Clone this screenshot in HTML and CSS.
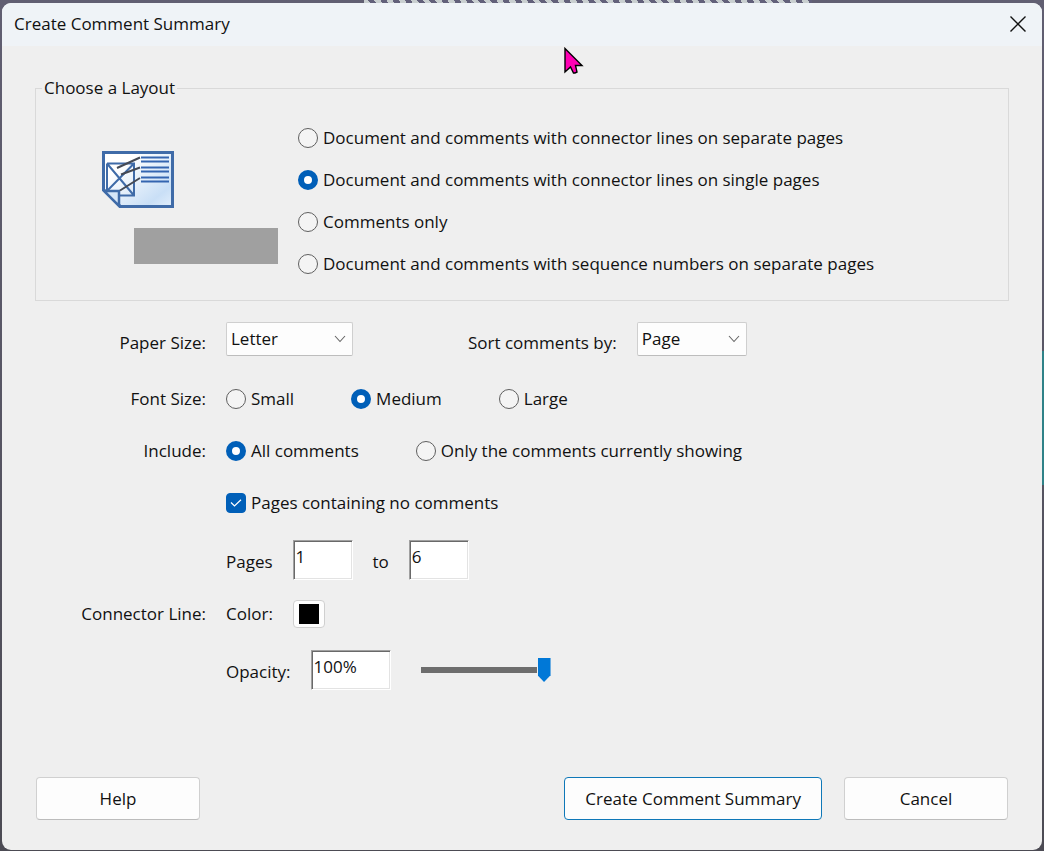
FILE: index.html
```html
<!DOCTYPE html>
<html lang="en">
<head>
  <meta charset="UTF-8">
  <meta name="viewport" content="width=device-width, initial-scale=1.0">
  <title>Create Comment Summary</title>
  <link rel="stylesheet" href="styles.css">
</head>
<body>

  <form class="dialog">
    <header class="titlebar">
      <h1>Create Comment Summary</h1>
      <button type="button" class="close" aria-label="Close">
        <svg width="16" height="16" viewBox="0 0 16 16">
          <path d="M0.5 0.5L15.5 15.5M15.5 0.5L0.5 15.5" fill="none" stroke="#111" stroke-width="1.4"/>
        </svg>
      </button>
    </header>

    <main class="content">
      <fieldset class="layout">
        <legend>Choose a Layout</legend>
        <div class="layout-body">
          <div class="preview">
            <svg width="72" height="57" viewBox="0 0 72 57">
              <defs>
                <linearGradient id="sheet" x1="0" y1="0" x2="1" y2="1">
                  <stop offset="0.25" stop-color="#fff"/>
                  <stop offset="0.8" stop-color="#c9dff6"/>
                  <stop offset="1" stop-color="#e2eefb"/>
                </linearGradient>
              </defs>
              <path d="M1.5 1.5H70.5V55.5H18.5L1.5 38.5Z" fill="url(#sheet)" stroke="#3f6ba8" stroke-width="3"/>
              <!-- page with its drawing -->
              <path d="M5 12.5H32V44.5H18M5 12.5V40M5 12.5L32 44.5M32 12.5L5 40" fill="none" stroke="#3f6ba8" stroke-width="2"/>
              <!-- folded corner -->
              <path d="M2 40H17V55Z" fill="#d5e6f8" stroke="#3f6ba8" stroke-width="2.5"/>
              <!-- comment lines -->
              <path d="M39 6.5H67M39 10.5H67M39 16.5H67M39 20.5H67M39 26.5H67M39 30.5H67" stroke="#3465b0" stroke-width="2"/>
              <!-- connectors -->
              <path d="M15 17L38 6.5M19 23.5L38 16.5M18 39.5L38 27" stroke="#454a55" stroke-width="2"/>
            </svg>
            <div class="preview-caption"></div>
          </div>
          <div class="layout-options">
            <label class="choice"><input type="radio" name="layout">Document and comments with connector lines on separate pages</label>
            <label class="choice"><input type="radio" name="layout" checked>Document and comments with connector lines on single pages</label>
            <label class="choice"><input type="radio" name="layout">Comments only</label>
            <label class="choice"><input type="radio" name="layout">Document and comments with sequence numbers on separate pages</label>
          </div>
        </div>
      </fieldset>

      <div class="settings">
        <div class="row row-selects">
          <label class="name" for="paper">Paper Size:</label>
          <div class="fields">
            <div class="select paper">
              <select id="paper"><option>Letter</option><option>Legal</option><option>A4</option></select>
              <svg width="12" height="8" viewBox="0 0 12 8"><path d="M1 1L6 6.5L11 1" fill="none" stroke="#666" stroke-width="1.1"/></svg>
            </div>
            <label class="sort-name" for="sort">Sort comments by:</label>
            <div class="select sort">
              <select id="sort"><option>Page</option><option>Author</option><option>Date</option><option>Type</option></select>
              <svg width="12" height="8" viewBox="0 0 12 8"><path d="M1 1L6 6.5L11 1" fill="none" stroke="#666" stroke-width="1.1"/></svg>
            </div>
          </div>
        </div>

        <div class="row" role="radiogroup" aria-labelledby="font-size">
          <span class="name" id="font-size">Font Size:</span>
          <div class="fields choices">
            <label class="choice"><input type="radio" name="font">Small</label>
            <label class="choice"><input type="radio" name="font" checked>Medium</label>
            <label class="choice"><input type="radio" name="font">Large</label>
          </div>
        </div>

        <div class="row" role="radiogroup" aria-labelledby="include">
          <span class="name" id="include">Include:</span>
          <div class="fields choices">
            <label class="choice"><input type="radio" name="include" checked>All comments</label>
            <label class="choice"><input type="radio" name="include">Only the comments currently showing</label>
          </div>
        </div>

        <div class="row">
          <span class="name"></span>
          <div class="fields choices">
            <label class="choice">
              <span class="check">
                <input type="checkbox" checked>
                <svg width="12" height="8" viewBox="0 0 12 8"><path d="M1 3.5L4.5 7L11 0.8" fill="none" stroke="#fff" stroke-width="1.2"/></svg>
              </span>Pages containing no comments
            </label>
          </div>
        </div>

        <div class="row row-inputs">
          <span class="name"></span>
          <div class="fields">
            <label for="from">Pages</label>
            <input type="text" class="page" id="from" value="1">
            <label for="to">to</label>
            <input type="text" class="page" id="to" value="6">
          </div>
        </div>

        <div class="row row-color">
          <span class="name">Connector Line:</span>
          <div class="fields">
            <label for="color">Color:</label>
            <button type="button" class="swatch" id="color" aria-label="Black"><span></span></button>
          </div>
        </div>

        <div class="row row-inputs">
          <span class="name"></span>
          <div class="fields">
            <label for="opacity">Opacity:</label>
            <input type="text" class="percent" id="opacity" value="100%">
            <input type="range" class="slider" min="0" max="100" value="100" aria-label="Opacity">
          </div>
        </div>
      </div>

      <footer class="buttons">
        <button type="button" class="btn">Help</button>
        <button type="submit" class="btn btn-default">Create Comment Summary</button>
        <button type="button" class="btn">Cancel</button>
      </footer>
    </main>

    <svg class="pointer" width="20" height="28" viewBox="0 0 20 28">
      <path d="M1 1.5V25L6.5 20L9.5 26H11L13 25L11.5 18.5H18Z" fill="#ff00b4" stroke="#000" stroke-width="1.4"/>
    </svg>
  </form>

</body>
</html>
```
FILE: styles.css
```css
* {
  margin: 0;
  padding: 0;
  box-sizing: border-box;
}

body {
  display: flex;
  min-height: 100vh;
  padding: 3px 2px 1px;
  background:
    repeating-linear-gradient(55deg, #c9cfd0 0 5px, #62607a 5px 10px) 364px 0 / 448px 3px no-repeat,
    linear-gradient(#2f8288, #2f8288) right 351px / 2px 134px no-repeat,
    linear-gradient(#615f72, #4c4b54);
  font-family: "Open Sans", "Noto Sans", sans-serif;
  font-size: 17px;
  line-height: 24px;
  color: #111;
}

input,
select,
button {
  font: inherit;
  color: inherit;
}

/* window */
.dialog {
  position: relative;
  display: flex;
  flex: 1;
  flex-direction: column;
  background: #efefef;
  border-radius: 9px;
  overflow: hidden;
}

.titlebar {
  display: flex;
  align-items: center;
  justify-content: space-between;
  height: 43px;
  padding: 0 16px 2px 12px;
  background: #eff3f7;
}

.titlebar h1 {
  font-size: 17px;
  font-weight: 400;
}

.close {
  display: flex;
  border: 0;
  background: none;
}

.content {
  display: flex;
  flex: 1;
  flex-direction: column;
  padding: 30px 33px;
}

/* layout group */
.layout {
  border: 1px solid #d9d9d9;
  padding: 0 8px 24px 66px;
}

.layout legend {
  margin-left: -60px;
  padding: 0 2px;
}

.layout-body {
  display: flex;
  gap: 20px;
  padding-top: 26px;
}

.preview {
  width: 176px;
  padding-top: 25px;
}

.preview svg {
  display: block;
}

.preview-caption {
  height: 36px;
  margin: 20px 0 0 32px;
  background: #a0a0a0;
}

.layout-options {
  display: flex;
  flex-direction: column;
  gap: 18px;
}

/* radios and check box */
.choice {
  display: flex;
  align-items: center;
  gap: 5px;
}

input[type="radio"] {
  appearance: none;
  flex: none;
  width: 20px;
  height: 20px;
  border: 1px solid #5f5f5f;
  border-radius: 50%;
  background: #f4f4f4;
}

input[type="radio"]:checked {
  border: 6px solid #005fb8;
  background: #fff;
}

.check {
  position: relative;
  display: flex;
}

.check input {
  appearance: none;
  width: 20px;
  height: 20px;
  border: 1px solid #5f5f5f;
  border-radius: 4px;
}

.check input:checked {
  border-color: #005fb8;
  background: #005fb8;
}

.check svg {
  position: absolute;
  top: 6px;
  left: 4px;
}

/* settings */
.settings {
  display: flex;
  flex-direction: column;
  gap: 22px;
  margin-top: 21px;
}

.row {
  display: grid;
  grid-template-columns: 171px 1fr;
  column-gap: 20px;
  align-items: center;
  min-height: 30px;
}

.name {
  text-align: right;
}

.fields {
  display: flex;
  align-items: center;
  gap: 20px;
}

.choices {
  gap: 57px;
}

.row-selects {
  margin-bottom: 6px;
}

.row-selects label {
  padding-top: 8px;
}

.row-inputs {
  height: 38px;
}

.row-inputs label {
  padding-top: 4px;
}

.row-color {
  min-height: 28px;
}

.sort-name {
  margin-left: 95px;
}

.select {
  position: relative;
}

.select select {
  appearance: none;
  display: block;
  width: 100%;
  height: 34px;
  padding: 0 4px;
  border: 1px solid #cfcfcf;
  border-bottom-color: #bdbdbd;
  border-radius: 2px;
  background: #fdfdfd;
}

.select svg {
  position: absolute;
  top: 13px;
  right: 7px;
  pointer-events: none;
}

.paper {
  width: 127px;
}

.sort {
  width: 110px;
}

input[type="text"] {
  height: 40px;
  padding: 0 2px 8px;
  border: 1px solid;
  border-color: #a0a0a0 #fff #fff #a0a0a0;
  background: #fff;
  box-shadow: inset 1px 1px #696969, inset -1px -1px #e3e3e3;
}

.page {
  width: 60px;
}

.percent {
  width: 80px;
}

.swatch {
  padding: 3px 5px;
  border: 1px solid #cfcfcf;
  border-radius: 4px;
  background: #fdfdfd;
}

.swatch span {
  display: block;
  width: 20px;
  height: 20px;
  background: #000;
}

.slider {
  appearance: none;
  width: 130px;
  height: 24px;
  margin-left: 10px;
  background: none;
}

.slider::-webkit-slider-runnable-track {
  height: 6px;
  background: linear-gradient(#6d6d6d, #6d6d6d) left / calc(100% - 14px) no-repeat;
}

.slider::-webkit-slider-thumb {
  appearance: none;
  width: 13px;
  height: 24px;
  margin-top: -9px;
  background: #0078d7;
  clip-path: polygon(0 0, 100% 0, 100% 72%, 50% 100%, 0 72%);
}

/* buttons */
.buttons {
  display: flex;
  gap: 22px;
  margin-top: auto;
  padding: 0 1px;
}

.btn {
  min-width: 164px;
  height: 43px;
  padding: 0 20px;
  border: 1px solid #d0d0d0;
  border-bottom-color: #bcbcbc;
  border-radius: 4px;
  background: #fdfdfd;
}

.btn:first-child {
  margin-right: auto;
}

.btn-default {
  border-color: #0f78b8;
}

/* mouse pointer over the window */
.pointer {
  position: absolute;
  top: 44px;
  left: 562px;
}
```
